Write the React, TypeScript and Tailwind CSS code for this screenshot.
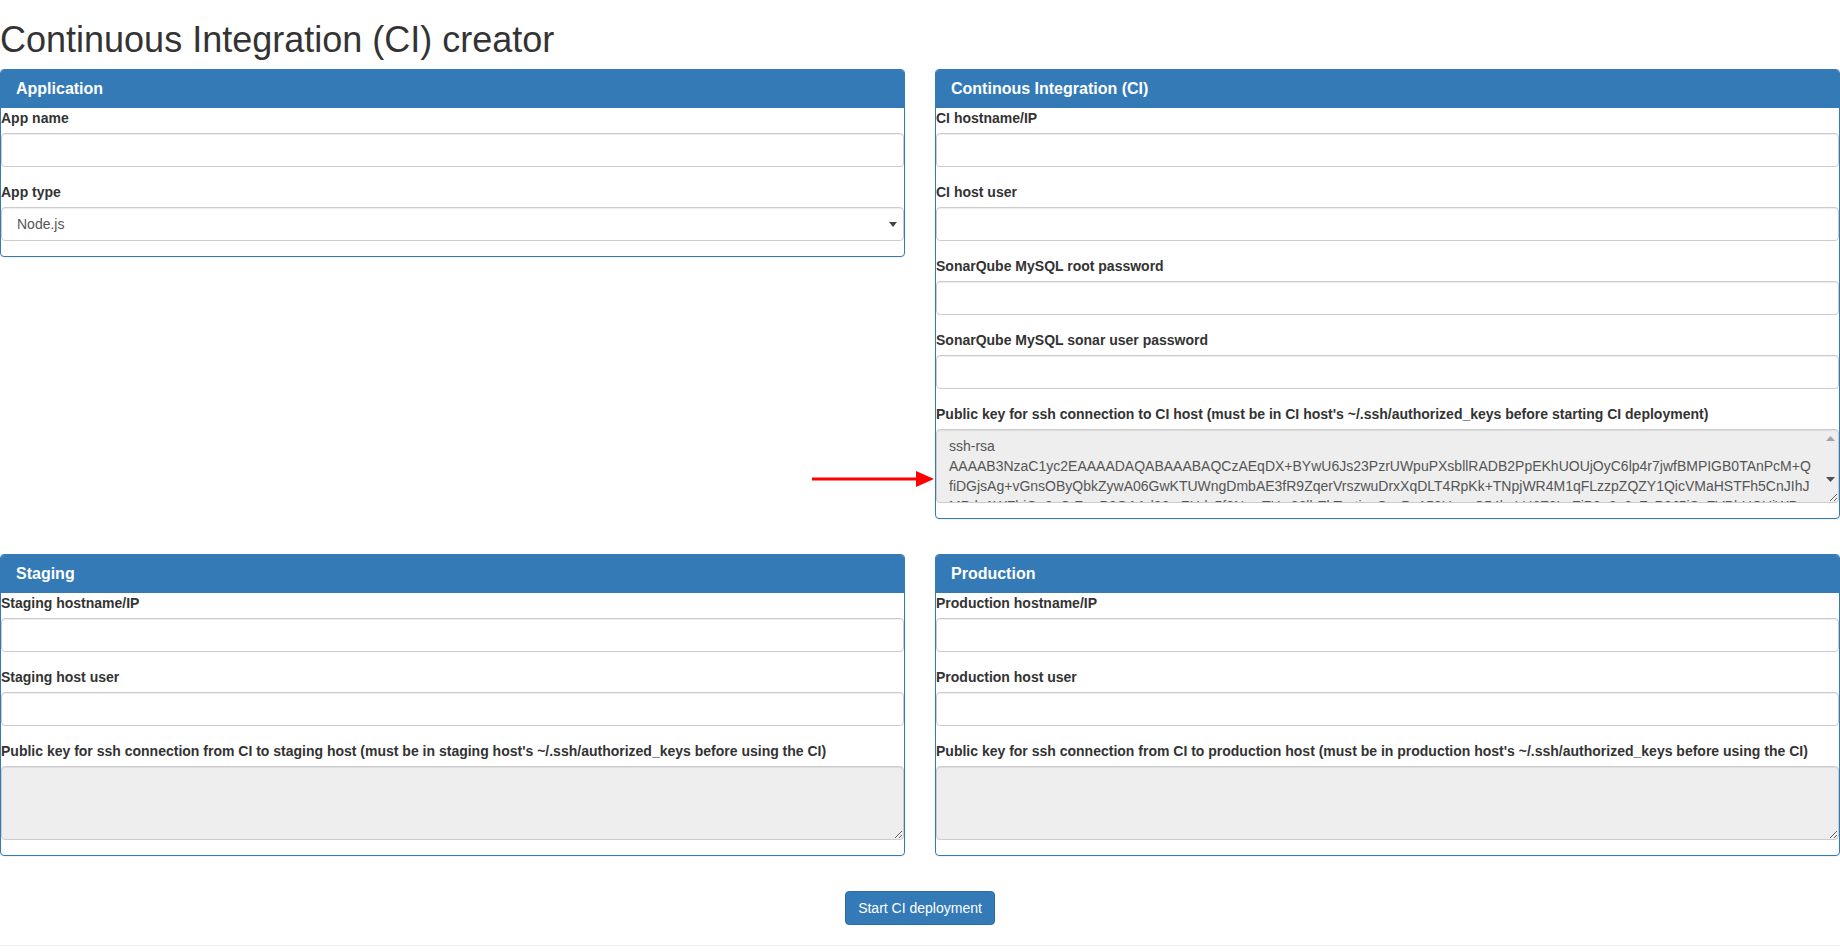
import React from "react";

const CI_KEY =
  "ssh-rsa AAAAB3NzaC1yc2EAAAADAQABAAABAQCzAEqDX+BYwU6Js23PzrUWpuPXsbllRADB2PpEKhUOUjOyC6lp4r7jwfBMPIGB0TAnPcM+QfiDGjsAg+vGnsOByQbkZywA06GwKTUWngDmbAE3fR9ZqerVrszwuDrxXqDLT4RpKk+TNpjWR4M1qFLzzpZQZY1QicVMaHSTFh5CnJIhJMPdsAWFhjGu9nSrZmrB2OAAd82mZHdy5f8NwnTHw36lbEkTnrtisnGxzPu159Ucc+C54bsLU6Z2LnFiP0q2o0cFxP0J5iSnZVPhUCUiWPnhZtJ2hR5s7XqLbGk1vDdTQ0wEoK9aHrMx3n ci@ci-host";

const inputCls =
  "block w-full h-[34px] px-3 py-[6px] text-[14px] leading-5 text-[#555] bg-white border border-[#ccc] rounded-[4px] shadow-[inset_0_1px_1px_rgba(0,0,0,0.075)] outline-none";

const areaCls =
  "block w-full h-[74px] px-3 py-[6px] text-[14px] leading-5 text-[#555] bg-[#eee] border border-[#ccc] rounded-[4px] shadow-[inset_0_1px_1px_rgba(0,0,0,0.075)] outline-none";

function Panel({ title, children }: { title: string; children: React.ReactNode }) {
  return (
    <div className="border border-[#337ab7] rounded-[4px] bg-white shadow-[0_1px_1px_rgba(0,0,0,0.05)]">
      <div className="bg-[#337ab7] text-white px-[15px] py-[10px] rounded-t-[3px] border-b border-[#337ab7]">
        <h3 className="text-[16px] leading-[17px] font-bold">{title}</h3>
      </div>
      <div>{children}</div>
    </div>
  );
}

function Field({ label, children }: { label: string; children: React.ReactNode }) {
  return (
    <div className="mb-[15px]">
      <label className="block mb-[5px] font-bold leading-5 text-[#333]">{label}</label>
      {children}
    </div>
  );
}

export default function App() {
  return (
    <div className="relative text-[14px] leading-5 text-[#333] bg-white font-['Liberation_Sans',Arial,sans-serif]">
      <h1 className="mt-[20px] mb-[10px] text-[36px] leading-[39px] font-normal">
        Continuous Integration (CI) creator
      </h1>

      <div className="grid grid-cols-2 gap-x-[30px] gap-y-[35px] items-start">
        <Panel title="Application">
          <Field label="App name">
            <input className={inputCls} />
          </Field>
          <Field label="App type">
            <div className="relative">
              <select className={inputCls + " appearance-none pl-[15px]"} defaultValue="node">
                <option value="node">Node.js</option>
              </select>
              <svg className="absolute right-[7px] top-[15px]" width="8" height="5" viewBox="0 0 8 5">
                <polygon points="0,0 8,0 4,5" fill="#444" />
              </svg>
            </div>
          </Field>
        </Panel>

        <Panel title="Continous Integration (CI)">
          <Field label="CI hostname/IP">
            <input className={inputCls} />
          </Field>
          <Field label="CI host user">
            <input className={inputCls} />
          </Field>
          <Field label="SonarQube MySQL root password">
            <input type="password" className={inputCls} />
          </Field>
          <Field label="SonarQube MySQL sonar user password">
            <input type="password" className={inputCls} />
          </Field>
          <Field label="Public key for ssh connection to CI host (must be in CI host's ~/.ssh/authorized_keys before starting CI deployment)">
            <div className="relative">
              <textarea readOnly rows={3} className={areaCls + " overflow-hidden pr-[27px]"} defaultValue={CI_KEY} />
              {/* scrollbar arrows */}
              <svg className="absolute right-[4px] top-[7px]" width="9" height="5" viewBox="0 0 9 5">
                <polygon points="0,5 9,5 4.5,0" fill="#a3a3a3" />
              </svg>
              <svg className="absolute right-[4px] top-[48px]" width="9" height="5" viewBox="0 0 9 5">
                <polygon points="0,0 9,0 4.5,5" fill="#505050" />
              </svg>
            </div>
          </Field>
        </Panel>

        <Panel title="Staging">
          <Field label="Staging hostname/IP">
            <input className={inputCls} />
          </Field>
          <Field label="Staging host user">
            <input className={inputCls} />
          </Field>
          <Field label="Public key for ssh connection from CI to staging host (must be in staging host's ~/.ssh/authorized_keys before using the CI)">
            <textarea readOnly rows={3} className={areaCls} />
          </Field>
        </Panel>

        <Panel title="Production">
          <Field label="Production hostname/IP">
            <input className={inputCls} />
          </Field>
          <Field label="Production host user">
            <input className={inputCls} />
          </Field>
          <Field label="Public key for ssh connection from CI to production host (must be in production host's ~/.ssh/authorized_keys before using the CI)">
            <textarea readOnly rows={3} className={areaCls} />
          </Field>
        </Panel>
      </div>

      <div className="flex justify-center mt-[35px]">
        <button className="h-[34px] px-3 py-[6px] text-[14px] leading-5 text-white bg-[#337ab7] border border-[#2e6da4] rounded-[4px]">
          Start CI deployment
        </button>
      </div>

      <hr className="mt-[20px] border-0 border-t border-[#eee]" />

      {/* annotation arrow pointing at the generated key */}
      <svg className="absolute left-[812px] top-[450px]" width="122" height="18" viewBox="0 0 122 18">
        <line x1="0" y1="9" x2="106" y2="9" stroke="#f00" strokeWidth="3" />
        <polygon points="104,1 122,9 104,17" fill="#f00" />
      </svg>
    </div>
  );
}
